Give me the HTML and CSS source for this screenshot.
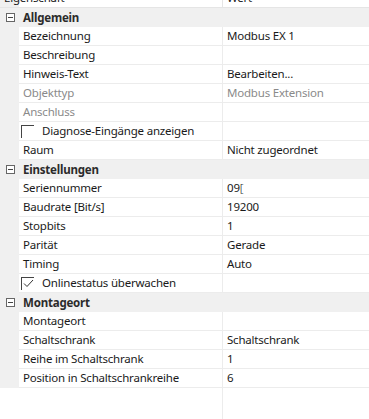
FILE: index.html
```html
<!DOCTYPE html>
<html>
<head>
<meta charset="UTF-8">
    <title>Eigenschaften</title>
    <link rel="stylesheet" href="styles.css">
</head>
<body>
    <div class="grid">
        <div class="head">
            <div class="name">Eigenschaft</div>
            <div class="val">Wert</div>
        </div>

        <div class="cat"><span class="tog"></span><span>Allgemein</span></div>
        <div class="row"><div class="name">Bezeichnung</div><div class="val">Modbus EX 1</div></div>
        <div class="row"><div class="name">Beschreibung</div><div class="val"></div></div>
        <div class="row"><div class="name">Hinweis-Text</div><div class="val">Bearbeiten...</div></div>
        <div class="row off"><div class="name">Objekttyp</div><div class="val">Modbus Extension</div></div>
        <div class="row off"><div class="name">Anschluss</div><div class="val"></div></div>
        <div class="row"><div class="name chk"><span class="box"></span>Diagnose-Eingänge anzeigen</div><div class="val"></div></div>
        <div class="row"><div class="name">Raum</div><div class="val">Nicht zugeordnet</div></div>

        <div class="cat"><span class="tog"></span><span>Einstellungen</span></div>
        <div class="row"><div class="name">Seriennummer</div><div class="val">09<span class="cur">[</span></div></div>
        <div class="row"><div class="name">Baudrate [Bit/s]</div><div class="val">19200</div></div>
        <div class="row"><div class="name">Stopbits</div><div class="val">1</div></div>
        <div class="row"><div class="name">Parität</div><div class="val">Gerade</div></div>
        <div class="row"><div class="name">Timing</div><div class="val">Auto</div></div>
        <div class="row"><div class="name chk"><span class="box on"><svg width="11" height="9" viewBox="0 0 11 9"><path d="M1 4.5 L4 7.5 L10 1" fill="none" stroke="#333" stroke-width="1"/></svg></span>Onlinestatus überwachen</div><div class="val"></div></div>

        <div class="cat"><span class="tog"></span><span>Montageort</span></div>
        <div class="row"><div class="name">Montageort</div><div class="val"></div></div>
        <div class="row"><div class="name">Schaltschrank</div><div class="val">Schaltschrank</div></div>
        <div class="row"><div class="name">Reihe im Schaltschrank</div><div class="val">1</div></div>
        <div class="row"><div class="name">Position in Schaltschrankreihe</div><div class="val">6</div></div>

        <div class="rest"></div>
    </div>
</body>
</html>
```

FILE: styles.css
```css
body { margin: 0; background: #fff; font-family: "Noto Sans", "Open Sans", sans-serif; font-size: 11.5px; letter-spacing: -0.2px; color: #1a1a1a; }
.grid { width: 369px; height: 419px; display: flex; flex-direction: column; overflow: hidden; }

.head { display: flex; height: 19px; margin-top: -12px; border-bottom: 1px solid #e5e5e5; line-height: 19px; }
.head .name { width: 218px; padding-left: 4px; }
.head .val { border-left: 1px solid #e5e5e5; padding-left: 4px; }

.cat { display: flex; align-items: center; height: 18px; border-bottom: 1px solid #f0f0f0; background: #f0f0f0; font-weight: bold; color: #2b2b2b; }
.tog { width: 9px; height: 9px; margin: 0 8px 0 6px; border: 1px solid #666; box-sizing: border-box; position: relative; background: #fff; }
.tog::after { content: ""; position: absolute; left: 1px; right: 1px; top: 3px; height: 1px; background: #444; }

.row { display: flex; height: 18px; line-height: 18px; margin-left: 19px; border-bottom: 1px solid #ececec; }
.row .name { width: 199px; padding-left: 4px; white-space: nowrap; }
.row .val { flex: 1; border-left: 1px solid #ececec; padding-left: 4px; white-space: nowrap; }
.row.off { color: #8a8a8a; }
.cur { font-weight: 300; }

.chk { display: flex; align-items: center; padding-left: 2px !important; width: 201px !important; }
.box { width: 13px; height: 13px; box-sizing: border-box; border-top: 1px solid #444; border-left: 1px solid #444; margin-right: 8px; display: flex; align-items: center; justify-content: center; }

.grid > .cat, .grid > .row { flex: none; }
.grid { background: linear-gradient(to right, #f0f0f0 19px, transparent 19px) no-repeat 0 0 / 19px 388px; }
.rest { flex: 1; margin-left: 222px; border-left: 1px solid #ececec; }
```
